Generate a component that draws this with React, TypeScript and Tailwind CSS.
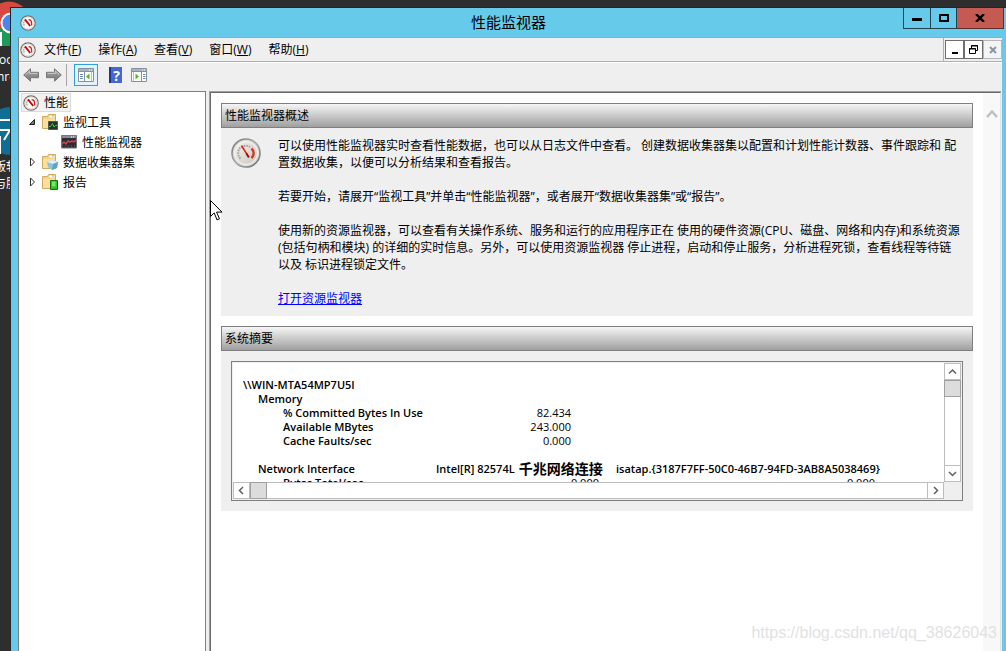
import type { ReactNode } from "react";

const menus = [
  { label: "文件", hotkey: "F" },
  { label: "操作", hotkey: "A" },
  { label: "查看", hotkey: "V" },
  { label: "窗口", hotkey: "W" },
  { label: "帮助", hotkey: "H" },
];

const memory = [
  ["% Committed Bytes In Use", "82.434"],
  ["Available MBytes", "243.000"],
  ["Cache Faults/sec", "0.000"],
];

function GaugeIcon({ className = "size-4" }: { className?: string }) {
  return (
    <svg viewBox="0 0 16 16" className={className} aria-hidden="true">
      <circle cx="8" cy="8" r="7.2" fill="#fafafa" stroke="#77706c" strokeWidth="1.2" />
      <circle cx="8" cy="8" r="6" fill="none" stroke="#d4d0cc" strokeWidth="0.8" />
      <path d="M4.2 10.5C3.6 8.5 3.6 6.4 4.6 5" fill="none" stroke="#8d8d8d" strokeWidth="1.1" strokeDasharray="1.4 0.7" />
      <path d="M8.6 4.6C10.4 4.6 11.6 6.2 11.6 8.4V10.6" fill="none" stroke="#d81e1e" strokeWidth="1.3" />
      <path d="M5 4.400 10.200 11" stroke="#d00000" strokeWidth="1.8" />
    </svg>
  );
}

function LargeGauge() {
  return (
    <svg viewBox="0 0 30 30" className="size-[30px] shrink-0" aria-hidden="true">
      <defs>
        <linearGradient id="rim" x1="0" y1="0" x2="1" y2="1">
          <stop offset="0" stopColor="#777" />
          <stop offset="0.5" stopColor="#a8a8a8" />
          <stop offset="1" stopColor="#5d7080" />
        </linearGradient>
        <linearGradient id="dial" x1="0" y1="0" x2="1" y2="1">
          <stop offset="0" stopColor="#f4f2ee" />
          <stop offset="1" stopColor="#cdc7bd" />
        </linearGradient>
      </defs>
      <circle cx="15" cy="15" r="14" fill="#dcdad5" stroke="url(#rim)" strokeWidth="1.6" />
      <circle cx="15" cy="15" r="11.5" fill="url(#dial)" stroke="#f7f7f7" />
      <path d="M9.500 20.5C6.400 17.500 6.400 12.500 9.500 9.500C12 7.500 16 7.200 19 9" fill="none" stroke="#a3a19b" strokeWidth="2" strokeDasharray="1.6 1" />
      <path d="M20.500 10.500C23.400 13 23.400 17.600 20.500 20.200" fill="none" stroke="#cf3a24" strokeWidth="2.4" />
      <path d="M10.6 7.600 17.800 19.400" stroke="#e01818" strokeWidth="1.6" />
      <path d="M15.5 15.500 17.800 19.400" stroke="#a01010" strokeWidth="1.8" />
    </svg>
  );
}

function FolderIcon({ children }: { children: ReactNode }) {
  return (
    <svg viewBox="0 0 16 16" className="size-4 shrink-0" aria-hidden="true">
      <path d="M0.5 2.5h5l1-2h7v14h-13z" fill="#f3d287" stroke="#d2ab5a" />
      <path d="M7.500 1.500h5v2h-5z" fill="#fff" />
      <path d="M10 1.500h2v1h-2z" fill="#55b5dc" />
      <path d="M1 5h12v9H1z" fill="#f9e0a0" />
      {children}
    </svg>
  );
}

function MonitorIcon() {
  return (
    <svg viewBox="0 0 16 14" className="h-[14px] w-4 shrink-0" aria-hidden="true">
      <path d="M0.5 0.5h15v12.500H0.5z" fill="#2d2d33" stroke="#77777d" />
      <path d="M1 1h14v2H1z" fill="#8b8b98" />
      <path d="M10 1.5h1v1h-1zM12 1.5h1v1h-1z" fill="#fff" />
      <path d="M1 9l2-2 2 2 2-3 2 1 2-1 2 1 2-2" fill="none" stroke="#d8434c" strokeWidth="1.400" />
      <path d="M1 11h14" stroke="#66666c" strokeDasharray="1 2" />
    </svg>
  );
}

function ToolArrow({ flip = false }: { flip?: boolean }) {
  return (
    <svg viewBox="0 0 16 14" className={flip ? "h-[14px] w-4 -scale-x-100" : "h-[14px] w-4"} aria-hidden="true">
      <defs>
        <linearGradient id="arrow" x1="0" y1="0" x2="0" y2="1">
          <stop offset="0" stopColor="#b5b5b5" />
          <stop offset="0.5" stopColor="#8f8f8f" />
          <stop offset="1" stopColor="#777" />
        </linearGradient>
      </defs>
      <path d="M0.7 7 7.5 0.8V4.3H15.5V9.7H7.5V13.2z" fill="url(#arrow)" stroke="#757575" />
      <path d="M2.500 6.800 6.700 3V5.400H14.500" fill="none" stroke="#c9c9c9" />
    </svg>
  );
}

function PaneIcon({ side }: { side: "left" | "right" }) {
  return (
    <svg viewBox="0 0 16 14" className="h-[14px] w-4" aria-hidden="true">
      <path d="M0.5 0.5h15v13H0.5z" fill="#fff" stroke="#8391a0" />
      <path d="M1 1h14v2H1z" fill="#a7b4c0" />
      <path d="M11 1.5h1v1h-1zM13 1.5h1v1h-1z" fill="#fff" />
      <path d="M1 3.500h14" stroke="#8391a0" />
      {side === "left" ? (
        <>
          <path d="M6.500 4v9" stroke="#8391a0" />
          <path d="M2 6.500h3M2 8.500h3M2 10.500h3" stroke="#6f8faf" />
          <path d="M11.500 5.500v6L8 8.500z" fill="#4fb82c" />
          <path d="M13.500 4v9" stroke="#b5bec7" />
        </>
      ) : (
        <>
          <path d="M10.500 4v9" stroke="#8391a0" />
          <path d="M12 6.500h2.500M12 8.500h2.500M12 10.500h2.500" stroke="#6f8faf" />
          <path d="M4.500 5.500v6L8 8.500z" fill="#4fb82c" />
          <path d="M2.500 4v9" stroke="#b5bec7" />
        </>
      )}
    </svg>
  );
}

function Chevron({ d }: { d: string }) {
  return (
    <svg viewBox="0 0 9 9" className="size-[9px]" fill="none" stroke="currentColor" strokeWidth="1.5" aria-hidden="true">
      <path d={d} />
    </svg>
  );
}

function Expander({ open = false }: { open?: boolean }) {
  return (
    <button type="button" aria-label={open ? "折叠" : "展开"} className="mr-[6px] flex w-2 shrink-0 justify-center">
      <svg viewBox="0 0 8 10" className="h-[10px] w-2">
        {open ? (
          <path d="M6.500 2.500v5h-5z" fill="#777" stroke="#222" />
        ) : (
          <path d="M2.500 1v8l4-4z" fill="#fff" stroke="#333" />
        )}
      </svg>
    </button>
  );
}

function Section({ title, children }: { title: string; children: ReactNode }) {
  return (
    <section className="bg-[#efefef]">
      <h2 className="flex h-[25px] items-center border border-[#7f7f7f] bg-linear-to-b from-[#f6f6f6] to-[#a0a0a0] pl-[3px]">
        {title}
      </h2>
      {children}
    </section>
  );
}

function Desktop() {
  return (
    <div className="absolute inset-y-0 left-0 w-8 text-[12px] whitespace-nowrap text-white" aria-hidden="true">
      <svg viewBox="0 0 32 200" className="absolute top-0 left-0 h-[200px] w-8">
        <circle cx="9" cy="23" r="21.5" fill="#d9483f" />
        <path d="M0 28 10 34V46H0z" fill="#1a9c58" />
        <circle cx="11" cy="23" r="10.500" fill="#fff" />
        <circle cx="11" cy="23" r="8.500" fill="#4a84ee" />
        <path d="M0 32h2v14H0z" fill="#fff" />
        <circle cx="10" cy="131" r="24" fill="#0f6e94" />
        <path d="M0 120h11M0 130h10L4 140M0 136v18" fill="none" stroke="#fff" strokeWidth="2" />
      </svg>
      <span className="absolute top-[51px] -left-px">oo</span>
      <span className="absolute top-[68px] -left-[3px]">hro</span>
      <span className="absolute top-[158px] -left-[6px]">版软</span>
      <span className="absolute top-[175px] -left-[6px]">与服</span>
    </div>
  );
}

export default function App() {
  return (
    <div className="relative flex h-screen flex-col overflow-hidden bg-[#2e2e2e] pt-2 pl-[11px] font-['Open_Sans','Noto_Sans_CJK_SC',sans-serif] text-[12px] leading-[17px] text-black">
      <Desktop />

      <div className="relative flex min-h-0 flex-1 flex-col bg-[#66caea] pr-1 pl-[7px] outline outline-[#20282c]">
        <header className="flex h-[29px] shrink-0 items-start">
          <div className="flex h-full flex-1 items-center pl-[2px]">
            <GaugeIcon />
          </div>
          <h1 className="flex h-full items-center pr-[7px] text-[15px]">性能监视器</h1>
          <div className="-mr-[2px] flex flex-1 justify-end">
            <button type="button" aria-label="最小化" className="flex h-[21px] w-7 items-center justify-center border border-t-0 border-[#23424d]">
              <span className="mt-[3px] h-[3px] w-[10px] bg-black" />
            </button>
            <button type="button" aria-label="最大化" className="flex h-[21px] w-[26px] items-center justify-center border-r border-b border-[#23424d]">
              <span className="h-2 w-[10px] border-2 border-black" />
            </button>
            <button type="button" aria-label="关闭" className="flex h-[21px] w-[47px] items-center justify-center border-r border-b border-[#5c2f2d] bg-[#c45a52]">
              <svg viewBox="0 0 10 8" className="h-2 w-[10px]" stroke="#000" strokeWidth="2.4">
                <path d="M1 0l8 8M9 0L1 8" />
              </svg>
            </button>
          </div>
        </header>

        <div className="flex min-h-0 flex-1 flex-col border-t border-l border-t-[#9aa9b0] border-l-[#808080] bg-[#efefef]">
          <nav className="flex h-6 shrink-0 items-center border-b border-[#adadb5] pl-[1px]">
            <GaugeIcon className="mr-2 size-4" />
            <div className="flex flex-1 gap-[17px]">
              {menus.map((m) => (
                <button type="button" key={m.hotkey}>
                  {m.label}(<u>{m.hotkey}</u>)
                </button>
              ))}
            </div>
            <div className="flex h-full items-center border-l border-[#adadb5] pl-[1px]">
              <button type="button" aria-label="最小化子窗口" className="flex h-[19px] w-[19px] items-end justify-center border border-[#6e6e6e] bg-white pb-1">
                <span className="h-[2px] w-[6px] bg-black" />
              </button>
              <button type="button" aria-label="还原子窗口" className="flex h-[19px] w-[19px] items-center justify-center border border-[#6e6e6e] bg-white">
                <svg viewBox="0 0 9 9" className="size-[9px]" fill="none" stroke="#000">
                  <path d="M2.500 3V0.500h6v5H6.500M2 1h7M0.500 3.500h6v5h-6zM0 4h7" />
                </svg>
              </button>
              <button type="button" aria-label="关闭子窗口" className="flex h-[19px] w-[19px] items-center justify-center border border-[#b4b8bd] bg-[#f4f4f4]">
                <svg viewBox="0 0 8 8" className="size-2" stroke="#8796a5" strokeWidth="2">
                  <path d="M1 1l6 6M7 1L1 7" />
                </svg>
              </button>
            </div>
          </nav>

          <div className="flex h-[29px] shrink-0 items-center border-t border-white pb-1 pl-1">
            <button type="button" aria-label="后退">
              <ToolArrow />
            </button>
            <button type="button" aria-label="前进" className="ml-[7px]">
              <ToolArrow flip />
            </button>
            <span className="ml-1 h-[22px] w-px bg-[#a5a5a5]" />
            <button type="button" aria-label="显示/隐藏控制台树" className="ml-[7px] flex h-[22px] w-6 items-center justify-center border border-[#2f9fdf] bg-[#e3f1fa]">
              <PaneIcon side="left" />
            </button>
            <button type="button" aria-label="帮助" className="ml-[11px] flex h-4 w-[13px] items-center justify-center border-l-2 border-[#1c3796] bg-[#4468cf] text-[14px] font-bold text-white">
              ?
            </button>
            <button type="button" aria-label="显示/隐藏操作窗格" className="ml-[9px]">
              <PaneIcon side="right" />
            </button>
          </div>

          <div className="flex min-h-0 flex-1">
            <aside className="w-[187px] shrink-0 border-t border-r border-[#808080] bg-white">
              <ul className="pt-px">
                <li className="flex h-[19px] items-center pl-[2px]">
                  <span className="flex h-[19px] items-center gap-[5px] border border-[#dcdcdc] bg-[#f1f1f1] pr-[2px] pl-px">
                    <GaugeIcon />
                    性能
                  </span>
                </li>
                <li className="flex h-5 items-center pl-[9px]">
                  <Expander open />
                  <FolderIcon>
                    <path d="M6.500 7.500h9v8h-9z" fill="#26302c" stroke="#565656" />
                    <path d="M7 12.500h1.500l2-3 1.500 3.500 1.500-1.500H15" fill="none" stroke="#36d436" />
                  </FolderIcon>
                  <span className="ml-[5px]">监视工具</span>
                </li>
                <li className="flex h-5 items-center pl-[42px]">
                  <MonitorIcon />
                  <span className="ml-[5px]">性能监视器</span>
                </li>
                <li className="flex h-5 items-center pl-[9px]">
                  <Expander />
                  <FolderIcon>
                    <path d="M5 8l5-2 6 2-1 6-5 2-4-3z" fill="#8cc4dc" />
                    <path d="M5 8l5-2 6 2-5 2z" fill="#d9f1fa" />
                    <path d="M11 10l-1 6 5-2 1-6z" fill="#5ea3c4" />
                  </FolderIcon>
                  <span className="ml-[5px]">数据收集器集</span>
                </li>
                <li className="flex h-5 items-center pl-[9px]">
                  <Expander />
                  <FolderIcon>
                    <path d="M8.500 6.500h7v9h-7z" fill="#2bc222" stroke="#117010" />
                    <path d="M10 7.500h3.500v5H10z" fill="#7be564" />
                  </FolderIcon>
                  <span className="ml-[5px]">报告</span>
                </li>
              </ul>
            </aside>

            <div className="mr-px ml-[3px] flex min-w-0 flex-1 border-t border-l border-[#a0a0a0]">
              <div className="flex min-w-0 flex-1 border-t border-r border-l border-t-[#696969] border-r-[#e3e3e3] border-l-[#696969] bg-white">
                <main className="flex min-w-0 flex-1 flex-col gap-[10px] p-[10px]">
                  <Section title="性能监视器概述">
                    <div className="flex gap-[17px] px-[10px] pt-[10px] pb-2">
                      <LargeGauge />
                      <div className="-mt-px mb-px flex flex-col items-start gap-[17px] whitespace-nowrap">
                        <p>
                          可以使用性能监视器实时查看性能数据，也可以从日志文件中查看。 创建数据收集器集以配置和计划性能计数器、事件跟踪和 配
                          <br />
                          置数据收集，以便可以分析结果和查看报告。
                        </p>
                        <p>若要开始，请展开“监视工具”并单击“性能监视器”，或者展开“数据收集器集”或“报告”。</p>
                        <p>
                          使用新的资源监视器，可以查看有关操作系统、服务和运行的应用程序正在 使用的硬件资源(CPU、磁盘、网络和内存)和系统资源
                          <br />
                          (包括句柄和模块) 的详细的实时信息。另外，可以使用资源监视器 停止进程，启动和停止服务，分析进程死锁，查看线程等待链
                          <br />
                          以及 标识进程锁定文件。
                        </p>
                        <a href="#resource-monitor" className="text-[#0000ff] underline">
                          打开资源监视器
                        </a>
                      </div>
                    </div>
                  </Section>

                  <Section title="系统摘要">
                    <div className="p-[10px]">
                      <div className="flex h-[140px] flex-col border border-[#7f7f7f] p-px">
                        <div className="flex min-h-0 flex-1">
                          <div className="min-w-0 flex-1 overflow-hidden bg-white pt-[15px] pl-[10px]">
                            <table className="w-[640px] table-fixed text-left text-[11px] leading-[14px] whitespace-nowrap">
                              <colgroup>
                                <col className="w-[193px]" />
                                <col className="w-[180px]" />
                                <col />
                              </colgroup>
                              <tbody>
                                <tr className="h-[14px]">
                                  <th className="p-0 font-semibold" colSpan={3}>\\WIN-MTA54MP7U5I</th>
                                </tr>
                                <tr className="h-[14px]">
                                  <th className="p-0 pl-[15px] font-semibold" colSpan={3}>Memory</th>
                                </tr>
                                {memory.map(([name, value]) => (
                                  <tr key={name} className="h-[14px]">
                                    <th className="p-0 pl-10 font-semibold">{name}</th>
                                    <td className="p-0 pr-[45px] text-right">{value}</td>
                                    <td className="p-0" />
                                  </tr>
                                ))}
                                <tr className="h-[14px]">
                                  <td colSpan={3} className="p-0" />
                                </tr>
                                <tr className="h-[14px]">
                                  <th className="p-0 pl-[15px] font-semibold">Network Interface</th>
                                  <th className="p-0 font-semibold">
                                    <div className="flex h-[14px] items-center gap-1">
                                      <span>Intel[R] 82574L</span>
                                      <span className="text-[14px] font-bold">千兆网络连接</span>
                                    </div>
                                  </th>
                                  <th className="p-0 font-semibold">{"isatap.{3187F7FF-50C0-46B7-94FD-3AB8A5038469}"}</th>
                                </tr>
                                <tr className="h-[14px]">
                                  <th className="p-0 pl-10 font-semibold">Bytes Total/sec</th>
                                  <td className="p-0 pr-[17px] text-right">0.000</td>
                                  <td className="p-0 pr-2 text-right">0.000</td>
                                </tr>
                              </tbody>
                            </table>
                          </div>
                          <div className="flex w-[17px] flex-col border-x border-[#bdbdbd] bg-white text-[#606060]">
                            <button type="button" aria-label="向上滚动" className="flex h-[17px] items-center justify-center border-y border-[#bdbdbd]">
                              <Chevron d="M1 6.500l3.500-3.500L8 6.500" />
                            </button>
                            <div className="-mx-px h-[17px] border border-[#a0a0a0] bg-[#dcdcdc]" />
                            <button type="button" aria-label="向下滚动" className="mt-auto flex h-[17px] items-center justify-center border-y border-[#bdbdbd]">
                              <Chevron d="M1 3l3.500 3.500L8 3" />
                            </button>
                          </div>
                        </div>
                        <div className="mr-[17px] flex h-[17px] shrink-0 border-y border-[#bdbdbd] bg-white text-[#606060]">
                          <button type="button" aria-label="向左滚动" className="flex w-[17px] items-center justify-center border-x border-[#bdbdbd]">
                            <Chevron d="M6 1L2.500 4.500L6 8" />
                          </button>
                          <div className="-my-px w-[17px] border border-[#a0a0a0] bg-[#dcdcdc]" />
                          <button type="button" aria-label="向右滚动" className="ml-auto flex w-[17px] items-center justify-center border-x border-[#bdbdbd]">
                            <Chevron d="M3 1l3.500 3.500L3 8" />
                          </button>
                        </div>
                      </div>
                    </div>
                  </Section>
                </main>

                <div className="flex w-[17px] shrink-0 justify-center bg-[#f8f8f8] pt-4 text-[#bfbfbf]">
                  <svg viewBox="0 0 12 9" className="h-[9px] w-3" fill="none" stroke="currentColor" strokeWidth="2.500" aria-hidden="true">
                    <path d="M1 8l5-5.500L11 8" />
                  </svg>
                </div>
              </div>
            </div>
          </div>
        </div>
      </div>

      <svg viewBox="0 0 13 21" className="absolute top-[200px] left-[210px] h-[21px] w-[13px]" aria-hidden="true">
        <path d="M0.500 0.500v16l3.700-3.600 2.800 7 2.500-1-2.900-6.800H12z" fill="#fff" stroke="#000" />
      </svg>

      <p className="absolute right-[9px] bottom-[9px] font-['Liberation_Sans',sans-serif] text-[16px] leading-[19px] text-[#e2e2e2]">
        https://blog.csdn.net/qq_38626043
      </p>
    </div>
  );
}
